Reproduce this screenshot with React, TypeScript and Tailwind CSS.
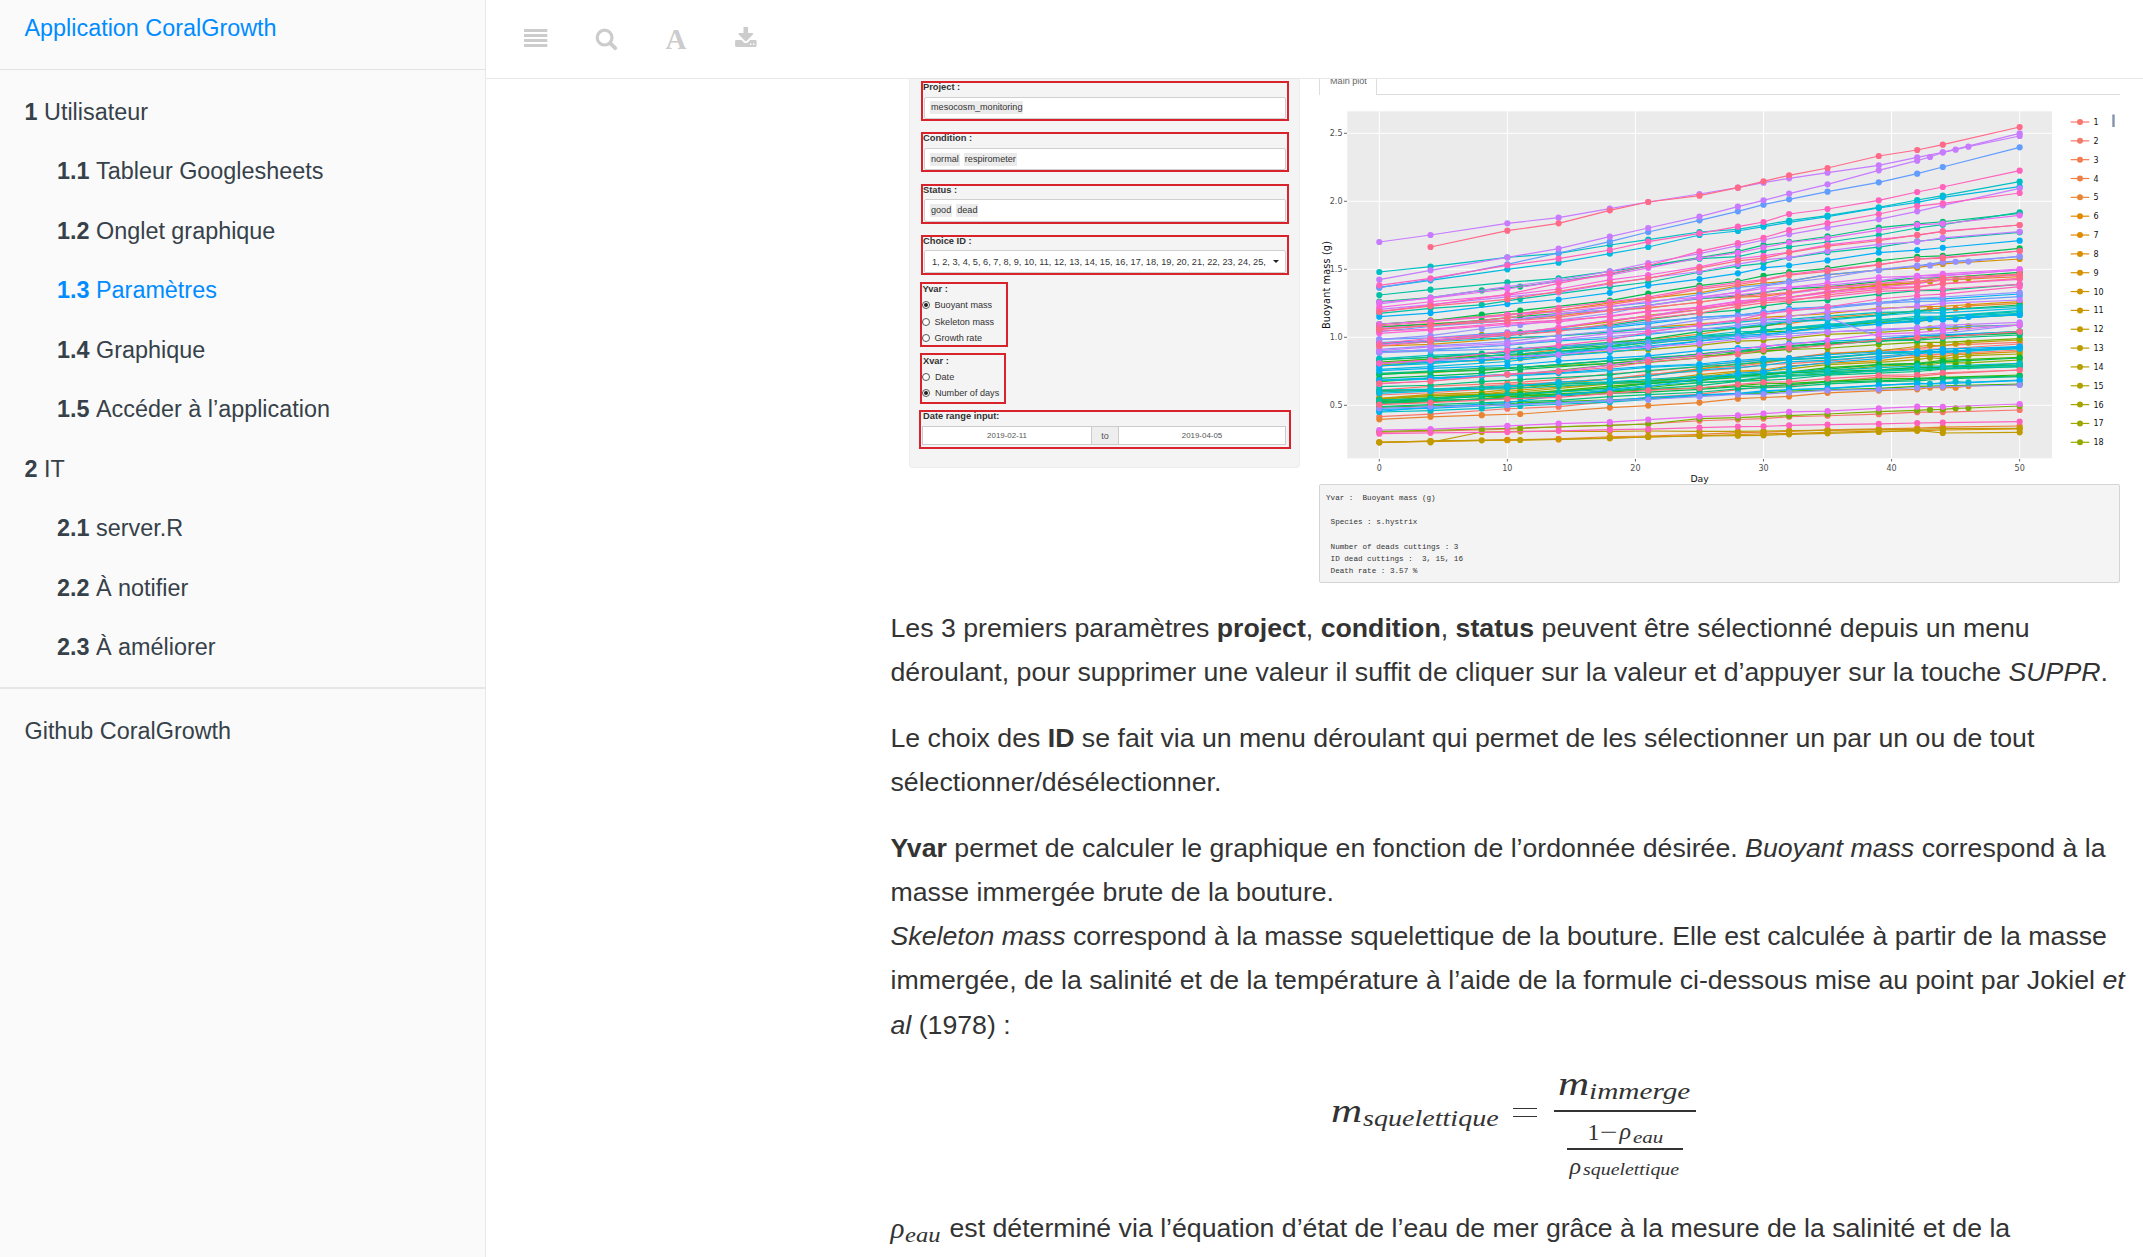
import React from "react";

type NavItem = { num?: string; label: string; sub?: boolean; active?: boolean };

const nav: NavItem[] = [
  { num: "1", label: "Utilisateur" },
  { num: "1.1", label: "Tableur Googlesheets", sub: true },
  { num: "1.2", label: "Onglet graphique", sub: true },
  { num: "1.3", label: "Paramètres", sub: true, active: true },
  { num: "1.4", label: "Graphique", sub: true },
  { num: "1.5", label: "Accéder à l’application", sub: true },
  { num: "2", label: "IT" },
  { num: "2.1", label: "server.R", sub: true },
  { num: "2.2", label: "À notifier", sub: true },
  { num: "2.3", label: "À améliorer", sub: true },
];

function Sidebar() {
  return (
    <aside className="h-full w-[486px] shrink-0 border-r border-[#e8e8e8] bg-[#fafafa] text-[23.38px] text-[#364149]">
      <div className="flex h-[70px] items-start border-b border-[#e2e2e2] pl-[24.5px] leading-[56px] text-[#008cff]">
        Application CoralGrowth
      </div>
      <nav className="flex flex-col pt-[12.3px]">
        {nav.map((n) => (
          <div
            key={n.num}
            className={
              "flex h-[59.55px] items-center gap-[6.5px] whitespace-nowrap " +
              (n.sub ? "pl-[57px] " : "pl-[24.5px] ") +
              (n.active ? "text-[#008cff]" : "")
            }
          >
            <b>{n.num}</b>
            <span>{n.label}</span>
          </div>
        ))}
      </nav>
      <div className="mt-[9.2px] border-t-2 border-[#e6e6e6] pt-[13px] pl-[24.5px] leading-[58px]">
        Github CoralGrowth
      </div>
    </aside>
  );
}

function Header() {
  return (
    <header className="flex h-[79px] shrink-0 items-start border-b border-[#e8e8e8] bg-white pt-[26px] pl-[38px] text-[#ccc]">
      <svg width="24" height="26" viewBox="0 0 24 26" fill="currentColor">
        <path d="M0 3h23.3v3H0zM0 8h23.3v3H0zM0 13h23.3v3H0zM0 18h23.3v3H0z" />
      </svg>
      <svg className="ml-[47px]" width="24" height="26" viewBox="0 0 24 26" fill="none" stroke="currentColor">
        <circle cx="9.6" cy="11.6" r="7.4" strokeWidth="3.2" />
        <path d="M15.2 17.2l5 5" strokeWidth="4" strokeLinecap="round" />
      </svg>
      <span className="ml-[46.5px] w-[22px] font-['Liberation_Serif',serif] text-[29px] leading-[27px] font-bold">A</span>
      <svg className="ml-[47px]" width="23" height="26" viewBox="0 0 23 26">
        <path
          fill="currentColor"
          d="M8.5 1h4.6v6h4.2c.9 0 1.2.9.6 1.5l-6.4 6.4c-.4.4-1 .4-1.4 0L3.700 8.500c-.6-.6-.3-1.500.6-1.500h4.200z"
        />
        <path
          fill="currentColor"
          d="M1.300 14h5.200l1.900 1.900a3.500 3.500 0 0 0 4.900 0l1.900-1.900h5.200c.7 0 1.200.5 1.200 1.200v4.600c0 .7-.5 1.200-1.200 1.200H1.300C.6 21 .1 20.500.1 19.800v-4.600c0-.7.500-1.200 1.200-1.200z"
        />
        <path fill="#fff" d="M15 17.600h1.400v1.400H15zM18 17.600h1.400v1.400H18z" />
      </svg>
    </header>
  );
}

function Tag({ children }: { children: React.ReactNode }) {
  return <span className="bg-[#ebebeb] px-px leading-[13px]">{children}</span>;
}

function Field({ label, children }: { label: string; children: React.ReactNode }) {
  return (
    <div className="mb-[11.300px] h-[40px] w-[368px] border-2 border-[#d8232c]">
      <div className="h-[13.500px] text-[9.300px] leading-[9px] font-bold">{label}</div>
      <div className="ml-[1px] flex h-[22.500px] w-[362px] items-center gap-[4px] rounded-xs border border-[#d0d0d0] bg-white pl-[5px] whitespace-nowrap">
        {children}
      </div>
    </div>
  );
}

function Radio({ label, on }: { label: string; on?: boolean }) {
  return (
    <div className="flex h-[16.300px] items-center">
      <span className="mr-[5px] flex size-[8px] items-center justify-center rounded-full border border-[#555] bg-white">
        {on && <span className="size-[4px] rounded-full bg-[#222]" />}
      </span>
      {label}
    </div>
  );
}

function ParamPanel() {
  return (
    <div className="h-[389px] w-[391px] shrink-0 rounded-b border border-t-0 border-[#ececec] bg-[#f4f4f4] pt-[2px] pl-[11px] text-[9.100px] leading-[14px] text-[#333]">
      <Field label="Project :">
        <Tag>mesocosm_monitoring</Tag>
      </Field>
      <Field label="Condition :">
        <Tag>normal</Tag>
        <Tag>respirometer</Tag>
      </Field>
      <Field label="Status :">
        <Tag>good</Tag>
        <Tag>dead</Tag>
      </Field>
      <Field label="Choice ID :">
        <span className="w-[343px] pl-[2px] text-[9.200px]">
          1, 2, 3, 4, 5, 6, 7, 8, 9, 10, 11, 12, 13, 14, 15, 16, 17, 18, 19, 20, 21, 22, 23, 24, 25,
        </span>
        <span className="-ml-[4px] border-x-[3px] border-t-[3px] border-x-transparent border-t-[#222]" />
      </Field>
      <div className="-mt-[4px] -ml-[1.500px] h-[65px] w-[88.500px] border-2 border-[#d8232c]">
        <div className="h-[13px] text-[9.300px] leading-[11px] font-bold">
          <span className="ml-px">Yvar :</span>
        </div>
        <Radio label="Buoyant mass" on />
        <Radio label="Skeleton mass" />
        <Radio label="Growth rate" />
      </div>
      <div className="mt-[6px] -ml-px h-[51px] w-[86px] border-2 border-[#d8232c]">
        <div className="h-[13.500px] pl-px text-[9.300px] leading-[12px] font-bold">Xvar :</div>
        <Radio label="Date" />
        <Radio label="Number of days" on />
      </div>
      <div className="mt-[6px] -ml-[2px] h-[39px] w-[372px] border-2 border-[#d8232c]">
        <div className="h-[13.500px] pl-[2px] text-[9.300px] leading-[9px] font-bold">Date range input:</div>
        <div className="ml-px flex h-[19.500px] w-[364px] border border-[#ccc] bg-white text-center text-[7.900px] leading-[18px] text-[#555]">
          <span className="w-[168px]">2019-02-11</span>
          <span className="w-[28px] border-x border-[#ccc] bg-[#eee] text-[9px]">to</span>
          <span className="flex-1">2019-04-05</span>
        </div>
      </div>
    </div>
  );
}

const palette: Record<string, string> = {
  a: "#F8766D", b: "#EA8331", c: "#D89000", d: "#C09B00", e: "#A3A500", f: "#7CAE00",
  g: "#39B600", h: "#00BB4E", i: "#00BF7D", j: "#00C1A3", k: "#00BFC4", l: "#00BAE0",
  m: "#00B0F6", n: "#619CFF", o: "#9590FF", p: "#C77CFF", q: "#E76BF3", r: "#FA62DB",
  s: "#FF62BC", t: "#FF6A88",
};

const days = [0, 4, 10, 14, 18, 21, 25, 28, 30, 32, 35, 39, 42, 44, 50];
const denseDays = [0, 4, 8, 11, 18, 21, 25, 28, 30, 32, 35, 39, 42, 44, 50];
const lateDays = [0, 4, 8, 11, 18, 21, 25, 28, 30, 32, 35, 39, 42, 43, 44, 45, 46, 50];

type Line = { c: string; pts: [number, number][] };

const zip = (xs: number[], ys: number[]) => xs.map((d, i) => [d, ys[i]] as [number, number]);

const measured: Line[] = [
  { c: "p", pts: zip(days, [516, 495, 460, 443, 416, 396, 372, 353, 338, 325, 308, 286, 262, 247, 190]) },
  { c: "t", pts: zip(days.slice(1), [531, 482, 460, 421, 396, 377, 353, 334, 316, 294, 258, 240, 224, 171]) },
  {
    c: "p",
    pts: zip(
      [0, 4, 10, 14, 18, 21, 25, 28, 30, 32, 35, 39, 42, 43, 44, 45, 46, 50],
      [629, 601, 562, 536, 500, 474, 440, 410, 391, 371, 343, 301, 272, 261, 247, 239, 230, 198],
    ),
  },
  { c: "n", pts: zip(days, [653, 628, 583, 549, 515, 486, 451, 424, 404, 388, 365, 337, 311, 291, 232]) },
  { c: "k", pts: zip(days, [606, 590, 562, 550, 525, 509, 486, 478, 465, 452, 437, 412, 390, 377, 335]) },
  { c: "s", pts: zip(days, [646, 625, 586, 566, 540, 515, 490, 470, 456, 432, 417, 391, 366, 351, 302]) },
  { c: "l", pts: zip(days, [652, 631, 598, 578, 551, 531, 495, 483, 470, 457, 440, 414, 397, 382, 350]) },
  { c: "j", pts: zip(days, [675, 659, 637, 625, 604, 588, 566, 560, 543, 531, 516, 495, 474, 464, 427]) },
  { c: "p", pts: zip(days, [702, 683, 650, 630, 604, 579, 551, 527, 510, 493, 473, 448, 424, 406, 355]) },
  {
    c: "o",
    pts: zip(days, [848, 838, 825, 810, 800, 790, 778, 766, 758, 752, 742, 800, 795, 790, 765]),
  },
  { c: "d", pts: zip([0, 4, 8, 11, 18, 21, 25, 28, 30, 32, 35, 39, 42, 44, 50], [1117, 1113, 1111, 1110, 1105, 1101, 1098, 1097, 1096, 1093, 1090, 1086, 1081, 1089, 1087]) },
  { c: "f", pts: zip(lateDays, [1084, 1081, 1077, 1074, 1066, 1062, 1046, 1043, 1040, 1037, 1032, 1025, 1021, 1019, 1018, 1015, 1014, 1008]) },
  { c: "d", pts: zip([4, 8, 11, 18, 21, 25, 28, 30, 32, 35, 39, 42, 44, 50], [1117, 1086, 1084, 1084, 1083, 1084, 1084, 1083, 1082, 1081, 1079, 1078, 1076, 1075]) },
];

// colour key, level at day 0, level at day 50, sampling schedule
const trends: [string, number, number, string?][] = [
  ["i", 695, 430, "g"], ["q", 697, 436], ["s", 725, 369], ["t", 725, 465], ["r", 712, 465], ["p", 718, 485],
  ["m", 740, 512], ["h", 762, 535, "g"], ["t", 778, 543], ["j", 730, 487, "g"], ["n", 785, 560], ["c", 764, 567],
  ["q", 762, 597], ["o", 808, 558, "L"], ["h", 770, 607, "g"], ["s", 768, 543], ["b", 772, 620], ["t", 778, 612],
  ["r", 790, 628], ["s", 783, 643], ["i", 820, 643, "g"], ["p", 775, 600], ["q", 825, 600], ["s", 820, 615],
  ["t", 828, 625], ["d", 822, 612, "L"], ["n", 808, 680], ["m", 818, 672], ["o", 838, 667], ["p", 842, 690],
  ["b", 880, 700, "L"], ["k", 822, 710], ["c", 828, 695], ["l", 845, 715], ["h", 870, 705, "g"], ["k", 866, 730],
  ["m", 888, 735, "L"], ["g", 876, 735, "g"], ["j", 880, 725], ["i", 868, 732, "g"], ["l", 898, 733], ["n", 848, 765],
  ["e", 885, 765, "L"], ["p", 880, 757], ["q", 942, 765], ["s", 880, 650], ["k", 888, 722], ["m", 902, 785],
  ["h", 914, 790, "g"], ["g", 935, 788, "g"], ["i", 910, 795, "g"], ["t", 940, 785], ["f", 912, 806, "g"], ["h", 925, 784, "g"],
  ["d", 985, 810, "L"], ["a", 960, 817, ""], ["m", 930, 830], ["l", 932, 836, "L"], ["i", 950, 832, "g"], ["a", 975, 822],
  ["c", 986, 845, "L"], ["e", 988, 852, "L"], ["g", 992, 862, "g"], ["h", 995, 864, "g"], ["f", 990, 870, "L"], ["g", 1000, 880, "L"],
  ["h", 962, 885, "g"], ["j", 966, 890], ["i", 1000, 890, "g"], ["t", 1004, 900], ["a", 965, 840], ["k", 960, 880],
  ["l", 970, 835], ["m", 1024, 830], ["h", 997, 918, "g"], ["i", 1010, 920], ["g", 990, 915, "g"], ["m", 1018, 932],
  ["k", 1026, 930, "L"], ["g", 1012, 942, "g"], ["o", 1015, 945], ["b", 1048, 944, "L"], ["a", 1040, 900], ["j", 990, 885],
  ["q", 1080, 1002], ["a", 1087, 1020], ["s", 1091, 1055], ["b", 1117, 1068], ["c", 1117, 1077],
];

const lines: Line[] = [
  ...measured,
  ...trends.map(([c, a, b, kind], k) => {
    const ds = kind === "g" ? denseDays : kind === "L" ? lateDays : days;
    const pts = ds.map((d, i) => {
      const t = d / 50;
      const bow = (a - b) * 0.05 * Math.sin(Math.PI * 2 * t);
      const jitter = d === 0 || d === 50 ? 0 : Math.sin(k * 5.3 + i * 2.1) * Math.min(3, (a - b) * 0.02);
      return [d, a + (b - a) * t + bow + jitter] as [number, number];
    });
    return { c, pts };
  }),
].sort((x, y) => x.c.charCodeAt(0) - y.c.charCodeAt(0));

const px = (d: number) => 1379.3 + d * 12.807;
const py = (v: number) => 70 + v / 3;

const legendColors = [
  "#F8766D", "#F5796A", "#F17D50", "#EE8043", "#E98535", "#E38900", "#DF8B00", "#DA8F00", "#D59100",
  "#CF9400", "#CA9700", "#C39A00", "#BC9D00", "#B59F00", "#AEA200", "#A6A400", "#9DA700", "#93A900",
];

function Plot() {
  return (
    <svg
      width="801"
      height="388"
      viewBox="1319 96 801 388"
      className="block overflow-visible font-['DejaVu_Sans',sans-serif]"
    >
      <rect x="1347.3" y="111.3" width="704.7" height="347" fill="#ebebeb" />
      {[0, 1, 2, 3, 4].map((i) => (
        <g key={i}>
          <path d={`M1347.3 ${133.300 + i * 68}H2052`} stroke="#fff" strokeWidth="1" />
          <path d={`M1344 ${133.300 + i * 68}h3`} stroke="#444" strokeWidth="0.8" />
          <text x="1342.500" y={136.200 + i * 68} textAnchor="end" fontSize="8" fill="#4d4d4d">
            {(2.5 - i * 0.5).toFixed(1)}
          </text>
        </g>
      ))}
      {[0, 10, 20, 30, 40, 50].map((d) => (
        <g key={d}>
          <path d={`M${px(d)} 111.300V458.300`} stroke="#fff" strokeWidth="1" />
          <path d={`M${px(d)} 459v2.500`} stroke="#444" strokeWidth="0.8" />
          <text x={px(d)} y="471" textAnchor="middle" fontSize="8" fill="#4d4d4d">
            {d}
          </text>
        </g>
      ))}
      {lines.map((l, k) => (
        <g key={k} fill={palette[l.c]}>
          <polyline
            points={l.pts.map(([d, v]) => `${px(d)},${py(v)}`).join(" ")}
            fill="none"
            stroke={palette[l.c]}
            strokeWidth="1.2"
          />
          {l.pts.map(([d, v]) => (
            <circle key={d} cx={px(d)} cy={py(v)} r="3.1" />
          ))}
        </g>
      ))}
      <text x="1699.600" y="481.700" textAnchor="middle" fontSize="9.300" fill="#111">
        Day
      </text>
      <text transform="translate(1330 285) rotate(-90)" textAnchor="middle" fontSize="9.800" textLength="88" fill="#111">
        Buoyant mass (g)
      </text>
      {legendColors.map((c, i) => (
        <g key={c}>
          <path d={`M2070.700 ${122 + i * 18.84}h18.600`} stroke={c} strokeWidth="1.2" />
          <circle cx="2080" cy={122 + i * 18.84} r="3" fill={c} />
          <text x="2093.500" y={125 + i * 18.84} fontSize="8" fill="#111">
            {i + 1}
          </text>
        </g>
      ))}
      <rect x="2112.300" y="114.500" width="2.400" height="12.500" fill="#8593aa" />
    </svg>
  );
}

function PlotPanel() {
  return (
    <div className="ml-[19px] w-[801px]">
      <div className="flex h-[17px] overflow-hidden text-[9.100px] text-[#666]">
        <div className="h-[16px] w-[58px] border-x border-[#ddd] pl-[10px] leading-[5px] whitespace-nowrap">Main plot</div>
        <div className="h-[16px] flex-1 border-b border-[#ddd]" />
      </div>
      <Plot />
      <pre className="h-[99px] rounded-xs border border-[#d4d4d4] bg-[#f4f4f4] pt-[7px] pl-[6px] font-['Liberation_Mono',monospace] text-[7.620px] leading-[12.150px] text-[#333]">
        {"Yvar :  Buoyant mass (g)\n\n Species : s.hystrix\n\n Number of deads cuttings : 3\n ID dead cuttings :  3, 15, 16\n Death rate : 3.57 %"}
      </pre>
    </div>
  );
}

function Fraction() {
  const wide = "inline-block origin-left scale-x-[1.2]";
  const wideM = "inline-block origin-left scale-x-[1.27]";
  return (
    <div className="-mt-[7px] flex h-[124px] items-start pl-[440px] font-['Liberation_Serif',serif] text-[#333] italic">
      <span className="mt-[30px] w-[32px] text-[34px] leading-[38px]">
        <span className={wideM}>m</span>
      </span>
      <span className="mt-[39.500px] w-[150px] text-[24px] leading-[34px]">
        <span className="inline-block origin-left scale-x-[1.17]">squelettique</span>
      </span>
      <span className="mt-[46px] flex h-[9px] w-[24px] flex-col justify-between border-y border-[#333]" />
      <div className="ml-[17px] flex w-[142px] flex-col">
        <div className="flex h-[50px] border-b-2 border-[#333] pl-[4px]">
          <span className="mt-[3px] w-[31px] text-[34px] leading-[38px]">
            <span className={wideM}>m</span>
          </span>
          <span className="mt-[12px] text-[24px] leading-[34px]">
            <span className="inline-block origin-left scale-x-[1.22]">immerge</span>
          </span>
        </div>
        <div className="mx-auto flex h-[38px] w-[116px] border-b-2 border-[#333] pl-[21px] text-[24px]">
          <span className="mt-[6px] w-[12px] leading-[28px] not-italic">1</span>
          <span className="mt-[6px] w-[20px] leading-[28px] not-italic">
            <span className="inline-block origin-left scale-x-[1.3]">−</span>
          </span>
          <span className="mt-[5px] w-[13px] leading-[28px]">ρ</span>
          <span className="mt-[14px] text-[17.500px] leading-[22px]">
            <span className={wide}>eau</span>
          </span>
        </div>
        <div className="mx-auto flex w-[116px] pl-[3px] text-[24px]">
          <span className="mt-[2px] w-[13px] leading-[28px]">ρ</span>
          <span className="mt-[9px] text-[17px] leading-[22px]">
            <span className="inline-block origin-left scale-x-[1.17]">squelettique</span>
          </span>
        </div>
      </div>
    </div>
  );
}

export default function App() {
  return (
    <div className="flex h-[1257px] w-[2143px] overflow-hidden bg-white font-['Liberation_Sans',Arial,sans-serif]">
      <Sidebar />
      <main className="flex min-w-0 flex-1 flex-col">
        <Header />
        <section className="min-h-0 flex-1 overflow-hidden pl-[404.500px] text-[26.700px] leading-[44.130px] whitespace-nowrap text-[#333]">
          <div className="flex h-[504px] pl-[18.500px]">
            <ParamPanel />
            <PlotPanel />
          </div>
          <div className="flex flex-col gap-[22px] pt-[22.600px]">
            <p>
              Les 3 premiers paramètres <b>project</b>, <b>condition</b>, <b>status</b> peuvent être sélectionné depuis
              un menu
              <br />
              déroulant, pour supprimer une valeur il suffit de cliquer sur la valeur et d’appuyer sur la touche{" "}
              <i>SUPPR</i>.
            </p>
            <p>
              Le choix des <b>ID</b> se fait via un menu déroulant qui permet de les sélectionner un par un ou de tout
              <br />
              sélectionner/désélectionner.
            </p>
            <p>
              <b>Yvar</b> permet de calculer le graphique en fonction de l’ordonnée désirée. <i>Buoyant mass</i>{" "}
              correspond à la
              <br />
              masse immergée brute de la bouture.
              <br />
              <i>Skeleton mass</i> correspond à la masse squelettique de la bouture. Elle est calculée à partir de la
              masse
              <br />
              immergée, de la salinité et de la température à l’aide de la formule ci-dessous mise au point par Jokiel{" "}
              <i>et</i>
              <br />
              <i>al</i> (1978) :
            </p>
            <Fraction />
            <p className="-mt-[2px] flex">
              <span className="flex w-[59px] font-['Liberation_Serif',serif] italic">
                <span className="w-[14px] text-[29px]">ρ</span>
                <span className="inline-block origin-left scale-x-[1.17] pt-[7px] text-[21px]">eau</span>
              </span>
              est déterminé via l’équation d’état de l’eau de mer grâce à la mesure de la salinité et de la
            </p>
          </div>
        </section>
      </main>
    </div>
  );
}
